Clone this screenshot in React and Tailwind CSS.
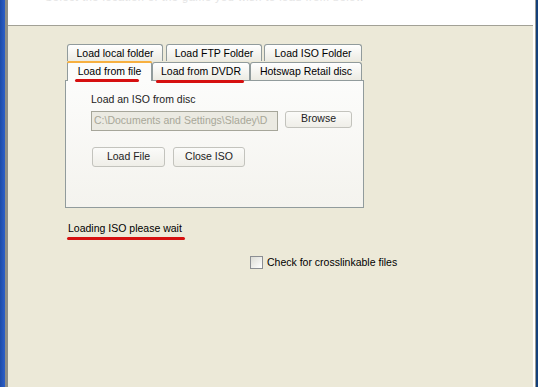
import React from 'react';

const font = { fontFamily: '"Liberation Sans", Arial, sans-serif' };

function Tab({ label, className = '' }) {
  return (
    <div
      className={`flex items-center justify-center border border-b-0 border-[#919b9c] rounded-t-[3px] bg-gradient-to-b from-white to-[#ecebe3] text-[10.5px] text-black leading-none ${className}`}
    >
      {label}
    </div>
  );
}

function XpButton({ children, className = '' }) {
  return (
    <div
      className={`flex items-center justify-center border border-[#c3c3bd] rounded-[3px] bg-gradient-to-b from-[#fbfbf9] to-[#efeee8] text-[10.5px] text-[#222] ${className}`}
    >
      {children}
    </div>
  );
}

export default function App() {
  return (
    <div className="relative w-[538px] h-[387px] overflow-hidden flex bg-[#ece9d8]" style={font}>
      {/* left window frame */}
      <div className="w-[5px] h-full bg-gradient-to-r from-[#1c4aa8] to-[#2d5fc8]" />
      <div className="w-[3px] h-full bg-[#8d8d86]" />

      {/* client area */}
      <div className="flex-1 flex flex-col">
        <div className="h-[26px] bg-white overflow-hidden border-b border-[#a2a196] flex">
          <span className="ml-[37px] -mt-[10px] text-[11px] leading-[14px] text-[#e4e4e4] tracking-[0.5px]">
            Select the location of the game you wish to load from below
          </span>
        </div>

        <div className="flex-1 pt-[18px]">
          {/* tab control */}
          <div className="ml-[57px] w-[299px]">
            <div className="flex h-[17px] pl-[2px]">
              <Tab label="Load local folder" className="w-[96px]" />
              <Tab label="Load FTP Folder" className="w-[96px] ml-[3px]" />
              <Tab label="Load ISO Folder" className="w-[98px] ml-[2px]" />
            </div>
            <div className="flex h-[19px] pl-[2px] items-end">
              <div className="relative z-10 w-[85px] h-[20px] -mb-[1px] flex items-center justify-center border border-b-0 border-[#919b9c] rounded-t-[3px] bg-[#fcfcfb] text-[10.5px] text-black">
                <div className="absolute -top-[1px] -left-[1px] -right-[1px] h-[2px] rounded-t-[3px] bg-[#f7b040]" />
                Load from file
              </div>
              <Tab label="Load from DVDR" className="w-[98px] h-[18px]" />
              <Tab label="Hotswap Retail disc" className="w-[112px] h-[18px]" />
            </div>
            <div className="h-[128px] border border-[#919b9c] bg-gradient-to-b from-[#fcfcfb] to-[#f4f3ee] pl-[25px] pt-[13px]">
              <div className="text-[10.5px] text-[#222] leading-none">Load an ISO from disc</div>
              <div className="flex mt-[6px]">
                <div className="w-[187px] h-[20px] border border-[#a6a69a] bg-[#ebeae2] text-[10.5px] text-[#a8a798] flex items-center pl-[2px] overflow-hidden whitespace-nowrap">
                  C:\Documents and Settings\Sladey\D
                </div>
                <XpButton className="w-[67px] h-[17px] ml-[7px]">Browse</XpButton>
              </div>
              <div className="flex mt-[16px] ml-[1px]">
                <XpButton className="w-[73px] h-[20px]">Load File</XpButton>
                <XpButton className="w-[72px] h-[20px] ml-[8px]">Close ISO</XpButton>
              </div>
            </div>
          </div>

          <div className="ml-[60px] mt-[15px] text-[10.5px] text-black leading-none">Loading ISO please wait</div>

          <div className="flex items-center ml-[242px] mt-[21px]">
            <div className="w-[13px] h-[13px] border border-[#8b8e93] bg-gradient-to-br from-[#dcdcd5] to-white" />
            <span className="ml-[4px] text-[10.5px] text-black">Check for crosslinkable files</span>
          </div>
        </div>
      </div>

      {/* right window frame */}
      <div className="w-[2px] h-full bg-white" />
      <div className="w-[1px] h-full bg-[#9a9a94]" />
      <div className="w-[2px] h-full bg-[#13407a]" />

      {/* red annotation underlines */}
      <div className="absolute z-20 left-[75px] top-[79px] w-[64px] h-[3px] rounded-full bg-[#d61010]" />
      <div className="absolute z-20 left-[156px] top-[80px] w-[88px] h-[3px] rounded-full bg-[#d61010]" />
      <div className="absolute z-20 left-[67px] top-[237px] w-[118px] h-[3px] rounded-full bg-[#d61010]" />
    </div>
  );
}
